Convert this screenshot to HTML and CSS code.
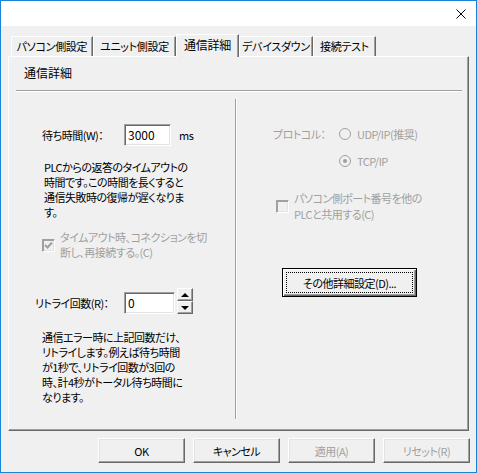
FILE: index.html
```html
<!DOCTYPE html>
<html lang="ja">
<head>
<meta charset="utf-8">
<title>通信詳細</title>
<link rel="stylesheet" href="styles.css">
</head>
<body>
<div class="window">
  <div class="titlebar">
    <svg class="close" width="10" height="10" viewBox="0 0 10 10"><path d="M0.5 0.5 L9.5 9.5 M9.5 0.5 L0.5 9.5" stroke="#000" stroke-width="1" fill="none"/></svg>
  </div>
  <div class="client">
    <div class="tabs">
      <div class="tab w1">パソコン側設定</div>
      <div class="tab w2">ユニット側設定</div>
      <div class="tab active w3">通信詳細</div>
      <div class="tab w4">デバイスダウン</div>
      <div class="tab w5">接続テスト</div>
    </div>
    <div class="panel">
      <div class="panel-title">通信詳細</div>
      <div class="sep"></div>
      <div class="cols">
        <div class="left">
          <div class="row1">
            <span class="lbl1">待ち時間(W)：</span>
            <div class="field f1">3000</div>
            <span class="unit">ms</span>
          </div>
          <p class="p1">PLCからの返答のタイムアウトの<br>時間です。この時間を長くすると<br>通信失敗時の復帰が遅くなりま<br>す。</p>
          <div class="chk-row disabled">
            <span class="checkbox checked"><svg width="11" height="11" viewBox="0 0 11 11"><path d="M2 5 L4.5 7.5 L9 2.5" stroke="#a0a0a0" stroke-width="2" fill="none"/></svg></span>
            <span>タイムアウト時、コネクションを切<br>断し、再接続する。(C)</span>
          </div>
          <div class="row2">
            <span class="lbl2">リトライ回数(R)：</span>
            <div class="field f2">0</div>
            <div class="spin">
              <div class="spin-btn"><span class="tri-up"></span></div>
              <div class="spin-btn"><span class="tri-down"></span></div>
            </div>
          </div>
          <p class="p2">通信エラー時に上記回数だけ、<br>リトライします。例えば待ち時間<br>が1秒で、リトライ回数が3回の<br>時、計4秒がトータル待ち時間に<br>なります。</p>
        </div>
        <div class="vline"></div>
        <div class="right">
          <div class="proto disabled">
            <span class="lbl3">プロトコル：</span>
            <span class="radio"></span>
            <span>UDP/IP(推奨)</span>
          </div>
          <div class="tcp disabled">
            <span class="radio on"></span>
            <span>TCP/IP</span>
          </div>
          <div class="chk2 disabled">
            <span class="checkbox"></span>
            <span>パソコン側ポート番号を他の<br>PLCと共用する(C)</span>
          </div>
          <div class="more-wrap">
            <div class="btn-default"><span class="focus">その他詳細設定(D)...</span></div>
          </div>
        </div>
      </div>
    </div>
    <div class="buttons">
      <div class="btn">OK</div>
      <div class="btn">キャンセル</div>
      <div class="btn disabled">適用(A)</div>
      <div class="btn disabled">リセット(R)</div>
    </div>
  </div>
</div>
</body>
</html>
```

FILE: styles.css
```css
html, body {
  margin: 0;
  padding: 0;
  background: #f0f0f0;
}
body {
  font-family: "Noto Sans CJK JP", "Noto Sans", sans-serif;
  font-size: 11px;
  letter-spacing: -0.5px;
  font-feature-settings: "palt";
  color: #000;
}
.window {
  width: 477px;
  height: 473px;
  box-sizing: border-box;
  border: 1px solid #1883d7;
  background: #f0f0f0;
  overflow: hidden;
}
.titlebar {
  height: 25px;
  box-sizing: border-box;
  background: #fff;
  display: flex;
  justify-content: flex-end;
  align-items: flex-start;
  padding: 8px 10px 0 0;
}
.close { display: block; }
.client {
  padding: 8px 7px 0 7px;
}
.tabs {
  display: flex;
  align-items: flex-end;
  height: 22px;
  padding-left: 3px;
  position: relative;
  z-index: 1;
}
.tab {
  box-sizing: border-box;
  height: 20px;
  border-top: 1px solid #fff;
  border-left: 1px solid #fff;
  border-right: 1px solid #696969;
  box-shadow: inset -1px 0 0 #a0a0a0;
  background: #f0f0f0;
  line-height: 19px;
  text-align: center;
  white-space: nowrap;
  letter-spacing: -0.3px;
}
.tab.active {
  height: 23px;
  margin-bottom: -1px;
  line-height: 20px;
  font-size: 12px;
  letter-spacing: -0.2px;
}
.w1 { width: 82px; }
.w2 { width: 83px; }
.w3 { width: 63px; }
.w4 { width: 74px; }
.w5 { width: 63px; }
.panel {
  box-sizing: border-box;
  height: 375px;
  border: 1px solid;
  border-color: #fff #696969 #696969 #fff;
  box-shadow: inset -1px -1px 0 #a0a0a0;
}
.panel-title {
  padding: 8px 0 0 15px;
  line-height: 16px;
  font-size: 12px;
  letter-spacing: 0;
}
.sep {
  margin: 9px 6px 0 7px;
  border-top: 1px solid #a0a0a0;
  border-bottom: 1px solid #fff;
  height: 0;
}
.cols {
  display: flex;
}
.left {
  width: 226px;
  white-space: nowrap;
}
.vline {
  width: 0;
  margin-top: 7px;
  height: 320px;
  border-left: 1px solid #a0a0a0;
  border-right: 1px solid #fff;
}
.right {
  flex: 1;
  white-space: nowrap;
}
.disabled { color: #a0a0a0; }

.row1 {
  display: flex;
  align-items: center;
  margin-top: 32px;
  padding-left: 33px;
  height: 22px;
}
.lbl1 { width: 82px; }
.unit { margin-left: 8px; }
.field {
  box-sizing: border-box;
  height: 22px;
  background: #fff;
  border: 1px solid;
  border-color: #a0a0a0 #fff #fff #a0a0a0;
  box-shadow: inset 1px 1px 0 #696969, inset -1px -1px 0 #e3e3e3;
  padding-left: 3px;
  line-height: 20px;
  letter-spacing: 0;
  font-size: 12px;
}
.f1 { width: 47px; }
.f2 { width: 51px; }
.p1 {
  margin: 14px 0 0;
  padding-left: 35px;
  line-height: 15px;
}
.chk-row {
  display: flex;
  align-items: center;
  gap: 5px;
  margin-top: 10px;
  padding-left: 33px;
  line-height: 15px;
}
.checkbox {
  box-sizing: border-box;
  width: 13px;
  height: 13px;
  flex: none;
  border: 1px solid;
  border-color: #a0a0a0 #fff #fff #a0a0a0;
  box-shadow: inset 1px 1px 0 #a0a0a0, inset -1px -1px 0 #e3e3e3;
  background: #f0f0f0;
  display: flex;
  align-items: center;
  justify-content: center;
}
.checkbox svg { display: block; }
.row2 {
  display: flex;
  align-items: flex-end;
  margin-top: 28px;
  padding-left: 26px;
}
.lbl2 { width: 89px; line-height: 22px; }
.spin {
  margin-left: 2px;
  width: 16px;
  display: flex;
  flex-direction: column;
}
.spin-btn {
  box-sizing: border-box;
  height: 13px;
  border: 1px solid;
  border-color: #fff #696969 #696969 #fff;
  box-shadow: inset -1px -1px 0 #a0a0a0;
  background: #f0f0f0;
  display: flex;
  align-items: center;
  justify-content: center;
}
.tri-up {
  width: 0; height: 0;
  border-left: 4px solid transparent;
  border-right: 4px solid transparent;
  border-bottom: 4px solid #000;
}
.tri-down {
  width: 0; height: 0;
  border-left: 4px solid transparent;
  border-right: 4px solid transparent;
  border-top: 4px solid #000;
}
.p2 {
  margin: 16px 0 0;
  padding-left: 33px;
  line-height: 15px;
}

.proto {
  display: flex;
  align-items: center;
  margin-top: 34px;
  padding-left: 36px;
  line-height: 16px;
}
.lbl3 { width: 66px; }
.radio {
  box-sizing: border-box;
  width: 12px;
  height: 12px;
  flex: none;
  border-radius: 50%;
  border: 1px solid #a0a0a0;
  background: #f0f0f0;
  margin-right: 6px;
  display: flex;
  align-items: center;
  justify-content: center;
}
.radio.on::after {
  content: "";
  width: 4px;
  height: 4px;
  border-radius: 50%;
  background: #a0a0a0;
}
.tcp {
  display: flex;
  align-items: center;
  margin-top: 11px;
  padding-left: 102px;
  line-height: 16px;
}
.chk2 {
  display: flex;
  align-items: center;
  gap: 5px;
  margin-top: 21px;
  padding-left: 39px;
  line-height: 16px;
}
.more-wrap {
  margin-top: 46px;
  padding-left: 45px;
}
.btn-default {
  box-sizing: border-box;
  width: 135px;
  height: 29px;
  border: 1px solid #000;
  box-shadow: inset 1px 1px 0 #fff, inset -1px -1px 0 #696969, inset -2px -2px 0 #a0a0a0;
  background: #f0f0f0;
  padding: 3px;
  display: flex;
}
.focus {
  flex: 1;
  border: 1px dotted #000;
  display: flex;
  align-items: center;
  justify-content: center;
}
.buttons {
  display: flex;
  justify-content: flex-end;
  gap: 8px;
  margin-top: 7px;
  margin-right: -1px;
}
.btn {
  box-sizing: border-box;
  width: 87px;
  height: 25px;
  border: 1px solid;
  border-color: #fff #696969 #696969 #fff;
  box-shadow: inset -1px -1px 0 #a0a0a0, inset 1px 1px 0 #e3e3e3;
  background: #f0f0f0;
  display: flex;
  align-items: center;
  justify-content: center;
}
```
